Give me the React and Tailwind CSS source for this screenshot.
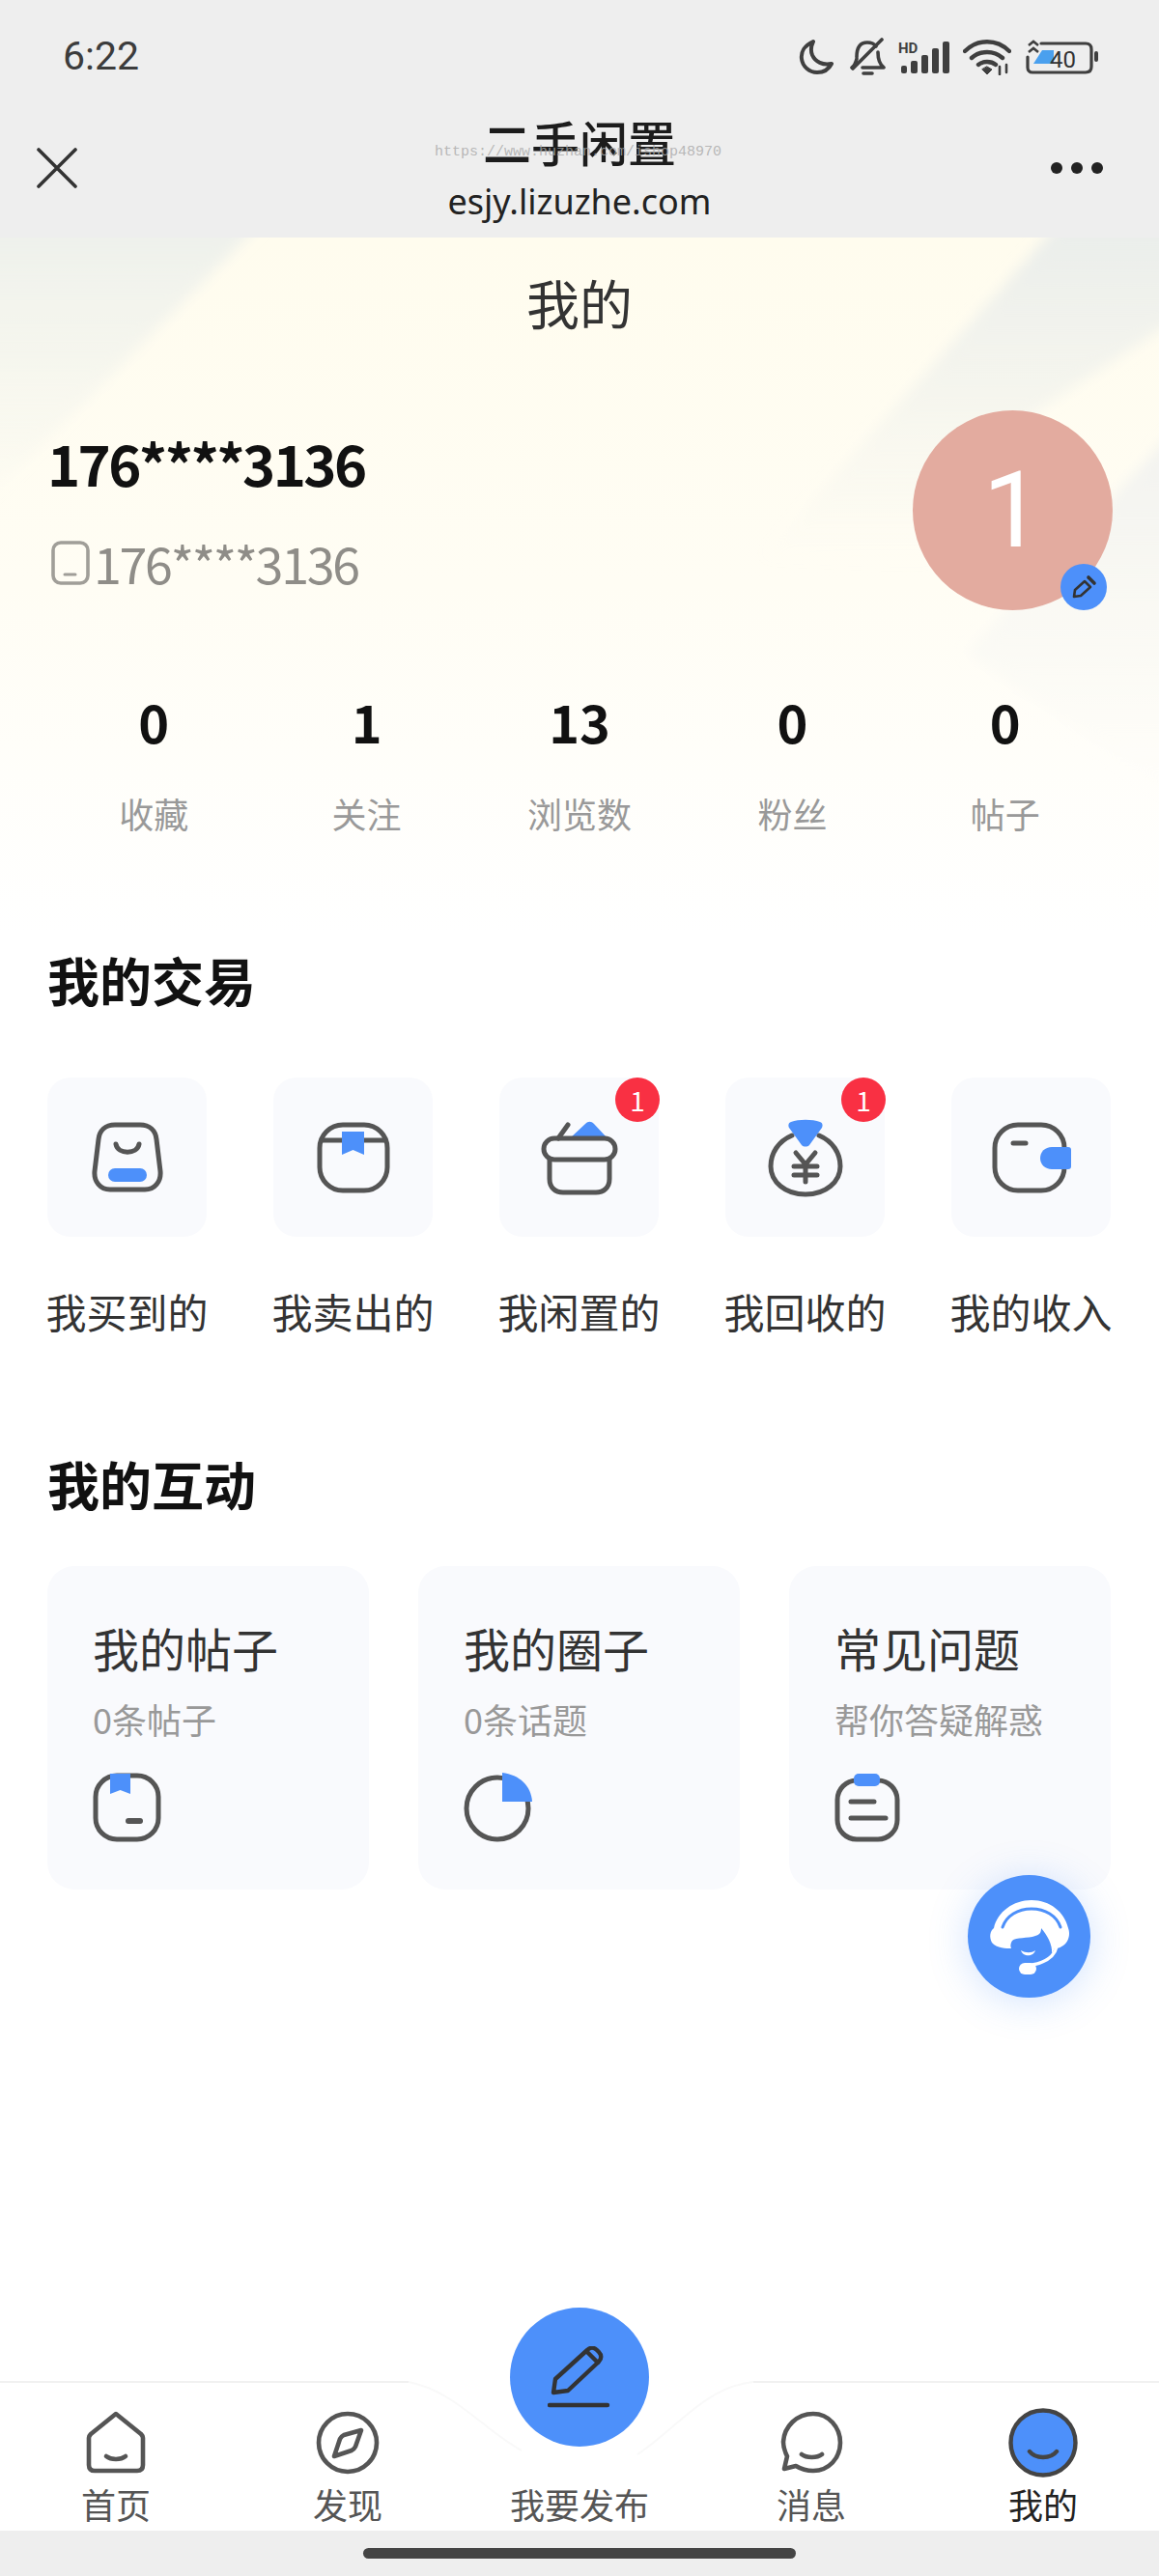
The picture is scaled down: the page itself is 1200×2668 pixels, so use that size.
const BLUE = '#4d90fa';
const INK = '#555555';

function Moon() {
  return (
    <svg width="36" height="38" viewBox="0 0 36 38" fill="none">
      <path d="M15 3C6 7 2 14 3 21c1 8 8 14 16 14 7 0 12-3 15-9-9 2-17-2-20-9-2-5-1-10 1-14z" stroke="#3f3f3f" strokeWidth="4" strokeLinejoin="round" />
    </svg>
  );
}

function BellOff() {
  return (
    <svg width="37" height="40" viewBox="0 0 37 40" fill="none" stroke="#3f3f3f" strokeWidth="3.6" strokeLinecap="round" strokeLinejoin="round">
      <path d="M7 20c0-10 4-15 11-15 4 0 7 1 9 4" />
      <path d="M29 15c0 6 1 12 6 16H13" />
      <path d="M2 31c3-2 4-5 5-9" />
      <path d="M33 2 3 32" />
      <path d="M14 37h9" />
    </svg>
  );
}

function Signal() {
  return (
    <svg width="53" height="34" viewBox="0 0 53 34" fill="#3f3f3f">
      <text x="0" y="13" fontSize="15" fontWeight="700" fontFamily="Roboto, sans-serif">HD</text>
      <rect x="3" y="26" width="6" height="8" rx="2" />
      <rect x="13" y="21" width="7" height="13" rx="2" />
      <rect x="24" y="15" width="7" height="19" rx="2" />
      <rect x="35" y="8" width="7" height="26" rx="2" />
      <rect x="46" y="1" width="7" height="33" rx="2" />
    </svg>
  );
}

function Wifi() {
  return (
    <svg width="50" height="38" viewBox="0 0 50 38" fill="none" stroke="#3f3f3f" strokeWidth="4.4" strokeLinecap="round">
      <path d="M2 13c13-13 33-13 46 0" />
      <path d="M9 20c9-8 23-8 32 0" />
      <path d="M16 27c5-4 13-4 18 0" />
      <path d="M20 32l5 5 5-5-5-3z" fill="#3f3f3f" strokeWidth="1" />
      <path d="M38 29v8M45 27v8" strokeWidth="2.6" />
    </svg>
  );
}

function Battery() {
  return (
    <svg width="75" height="38" viewBox="0 0 75 38" fill="none">
      <path d="M17 12h12v14H8l9-14z" fill="#4aa0ee" />
      <path d="M16 5h46c4 0 6 2 6 6v18c0 4-2 6-6 6H7c-3 0-5-2-5-5V19" stroke="#3f3f3f" strokeWidth="3.2" strokeLinecap="round" />
      <rect x="71" y="13" width="4" height="11" rx="2" fill="#3f3f3f" />
      <path d="M3 7l5-4 5 4M3 14l5-4 5 4" stroke="#3f3f3f" strokeWidth="2.6" />
      <text x="25" y="30" fontSize="24" fill="#333" fontFamily="Roboto, sans-serif">40</text>
    </svg>
  );
}

function Backdrop() {
  return (
    <svg className="absolute left-0 top-0" width="1200" height="720" viewBox="0 0 1200 720">
      <defs>
        <linearGradient id="cream" x1="0" y1="0" x2="0" y2="1">
          <stop offset="0" stopColor="#fffcee" />
          <stop offset="0.5" stopColor="#fffdf4" />
          <stop offset="1" stopColor="#ffffff" />
        </linearGradient>
        <linearGradient id="grayLeft" x1="0" y1="0" x2="0" y2="1">
          <stop offset="0" stopColor="#edf0ec" />
          <stop offset="1" stopColor="#edf0ec" stopOpacity="0" />
        </linearGradient>
        <linearGradient id="grayRight" x1="0" y1="0" x2="0" y2="1">
          <stop offset="0" stopColor="#e9edeb" />
          <stop offset="0.5" stopColor="#eef0ec" stopOpacity="0.6" />
          <stop offset="1" stopColor="#f3f3ee" stopOpacity="0" />
        </linearGradient>
        <linearGradient id="grayLow" x1="0" y1="0" x2="0" y2="1">
          <stop offset="0" stopColor="#f0f1ef" />
          <stop offset="1" stopColor="#f9f9f6" stopOpacity="0" />
        </linearGradient>
        <filter id="soft" x="-20%" y="-20%" width="140%" height="140%">
          <feGaussianBlur stdDeviation="7" />
        </filter>
      </defs>
      <rect width="1200" height="720" fill="url(#cream)" />
      <g filter="url(#soft)">
        <path d="M-30 -30H285L-30 290z" fill="url(#grayLeft)" />
        <path d="M1110 -30H1240V70L1075 179 960 340 790 330z" fill="url(#grayRight)" />
        <path d="M1240 175 1000 430 1240 600z" fill="url(#grayLow)" />
      </g>
    </svg>
  );
}

function TileIcon({ name }) {
  const s = { fill: 'none', stroke: INK, strokeWidth: 5, strokeLinecap: 'round', strokeLinejoin: 'round' };
  if (name === 'bag') {
    return (
      <svg width="74" height="74" viewBox="0 0 74 74">
        <path {...s} d="M24 3h26c10 0 16 6 17 15l4 33c1 11-6 19-16 19H19C9 70 2 62 3 51l4-33C8 9 14 3 24 3z" />
        <path {...s} d="M25 23c2 11 22 11 24 0" />
        <rect x="17" y="48" width="40" height="14" rx="7" fill={BLUE} />
      </svg>
    );
  }
  if (name === 'box') {
    return (
      <svg width="76" height="74" viewBox="0 0 76 74">
        <rect {...s} x="3" y="3" width="70" height="68" rx="24" />
        <path {...s} d="M6 19h64" />
        <path d="M26 10h23v24l-11.500-5-11.500 5z" fill={BLUE} />
      </svg>
    );
  }
  if (name === 'pot') {
    return (
      <svg width="80" height="78" viewBox="0 0 80 78">
        <path d="M30 19 46 4c3-3 6-3 9 0l14 15z" fill={BLUE} />
        <path {...s} d="M18 19 28 5" />
        <rect {...s} x="3" y="19" width="74" height="22" rx="11" />
        <path {...s} d="M9 41v20c0 9 6 14 14 14h34c8 0 14-5 14-14V41" />
      </svg>
    );
  }
  if (name === 'money') {
    return (
      <svg width="80" height="82" viewBox="0 0 80 82">
        <path {...s} d="M26 18C12 24 4 36 4 50c0 16 15 29 36 29s36-13 36-29c0-14-8-26-22-32" />
        <path d="M25 4c8-3 22-3 30 0 3 1 3 4 2 6L44 28c-2 2-6 2-8 0L23 10c-1-2-1-5 2-6z" fill={BLUE} />
        <path {...s} d="M30 36 40 48 50 36M28 50h24M28 59h24M40 48v18" />
      </svg>
    );
  }
  return (
    <svg width="82" height="74" viewBox="0 0 82 74">
      <rect {...s} x="3" y="3" width="72" height="68" rx="24" />
      <path {...s} d="M22 22h13" />
      <path d="M62 26h17c2 0 3 1 3 3v17c0 2-1 3-3 3H62c-7 0-12-5-12-11.500S55 26 62 26z" fill={BLUE} />
    </svg>
  );
}

function CardIcon({ name }) {
  const s = { fill: 'none', stroke: INK, strokeWidth: 5, strokeLinecap: 'round', strokeLinejoin: 'round' };
  if (name === 'post') {
    return (
      <svg width="72" height="72" viewBox="0 0 72 72">
        <rect {...s} x="3" y="3" width="65" height="66" rx="22" />
        <path d="M18 1h21v21l-10.500-4L18 22z" fill={BLUE} />
        <path d="M37 50h12" fill="none" stroke={INK} strokeWidth="6" strokeLinecap="round" />
      </svg>
    );
  }
  if (name === 'circle') {
    return (
      <svg width="72" height="72" viewBox="0 0 72 72">
        <circle {...s} cx="35" cy="37" r="32" />
        <path d="M40 0c18 2 30 14 31 30H40z" fill={BLUE} />
      </svg>
    );
  }
  return (
    <svg width="72" height="72" viewBox="0 0 72 72">
      <rect {...s} x="3" y="8" width="62" height="61" rx="20" />
      <rect x="20" y="1" width="27" height="13" rx="5" fill={BLUE} />
      <path d="M17 30h24M17 47h36" fill="none" stroke={INK} strokeWidth="5" strokeLinecap="round" />
    </svg>
  );
}

function NavIcon({ name }) {
  const s = { fill: 'none', stroke: INK, strokeWidth: 4.6, strokeLinecap: 'round', strokeLinejoin: 'round' };
  if (name === 'home') {
    return (
      <svg width="64" height="66" viewBox="0 0 64 66">
        <path {...s} d="M32 3 58 24c1 1 2 2 2 4v28c0 4-2 6-6 6H10c-4 0-6-2-6-6V28c0-2 1-3 2-4z" />
        <path {...s} d="M22 47c5 4 15 4 20 0" />
      </svg>
    );
  }
  if (name === 'compass') {
    return (
      <svg width="66" height="66" viewBox="0 0 66 66">
        <circle {...s} cx="33" cy="33" r="30" />
        <path {...s} d="M47 20 41 37c-1 2-2 3-4 4l-18 6 6-18c1-2 2-3 4-4z" />
      </svg>
    );
  }
  if (name === 'message') {
    return (
      <svg width="66" height="66" viewBox="0 0 66 66">
        <path {...s} d="M35 3C18 3 5 16 4 32c0 6 2 11 4 15L5 60l12-3c5 3 11 5 18 5 16 0 28-13 28-29S51 3 35 3z" />
        <path {...s} d="M23 45c5 4 16 4 21 0" />
      </svg>
    );
  }
  return (
    <svg width="72" height="72" viewBox="0 0 72 72">
      <circle cx="36" cy="36" r="33.500" fill={BLUE} stroke="#444444" strokeWidth="4.400" />
      <path d="M22 45c6 8 22 8 28 0" fill="none" stroke="#444444" strokeWidth="4.400" strokeLinecap="round" />
    </svg>
  );
}

function Headset() {
  return (
    <svg width="127" height="127" viewBox="0 0 127 127">
      <path d="M25 70C22 64 23 58 27 55 31 38 47 26 66 26S100 38 104 55C106 60 105 66 102 70 98 75 93 76 90 76L87 81C88 72 82 62 76 55 76 60 74 62 70 63 62 66 50 64 46 68 44 71 44 74 45 76 40 76 30 76 25 70z" fill="white" />
      <path d="M36 54C40 42 52 35 66 35S92 42 96 54" fill="none" stroke={BLUE} strokeWidth="3" strokeLinecap="round" />
      <path d="M55 78c5 3 11 3 15 0-2 7-13 7-15 0z" fill="white" />
      <path d="M92 74C90 84 82 90 67 93" fill="none" stroke="white" strokeWidth="3.500" strokeLinecap="round" />
      <rect x="53" y="91" width="18" height="12" rx="6" fill="white" />
    </svg>
  );
}

const STATS = [
  { value: '0', label: '收藏' },
  { value: '1', label: '关注' },
  { value: '13', label: '浏览数' },
  { value: '0', label: '粉丝' },
  { value: '0', label: '帖子' },
];

const TRADES = [
  { label: '我买到的', icon: 'bag' },
  { label: '我卖出的', icon: 'box' },
  { label: '我闲置的', icon: 'pot', badge: 1 },
  { label: '我回收的', icon: 'money', badge: 1 },
  { label: '我的收入', icon: 'wallet' },
];

const CARDS = [
  { title: '我的帖子', sub: '0条帖子', icon: 'post' },
  { title: '我的圈子', sub: '0条话题', icon: 'circle' },
  { title: '常见问题', sub: '帮你答疑解惑', icon: 'faq' },
];

const TABS = [
  { label: '首页', icon: 'home' },
  { label: '发现', icon: 'compass' },
  { label: '我要发布' },
  { label: '消息', icon: 'message' },
  { label: '我的', icon: 'me', active: true },
];

export default function App() {
  return (
    <div className="relative flex h-[2668px] w-[1200px] flex-col overflow-hidden bg-[#eeeeee] font-['Noto_Sans_CJK_SC','Noto_Sans',sans-serif]">
      {/* status bar */}
      <div className="flex h-[118px] items-center justify-between pl-[65px] pr-[63px]">
        <span className="font-['Roboto',sans-serif] text-[41px] text-[#3c3c3c]">6:22</span>
        <div className="flex items-center">
          <Moon />
          <div className="ml-[17px]"><BellOff /></div>
          <div className="ml-[13px]"><Signal /></div>
          <div className="ml-[14px]"><Wifi /></div>
          <div className="ml-[15px]"><Battery /></div>
        </div>
      </div>

      {/* browser title */}
      <div className="relative grid h-[128px] grid-cols-[1fr_auto_1fr]">
        <svg className="ml-[38px] mt-[35px]" width="42" height="42" viewBox="0 0 42 42" fill="none" stroke="#333333" strokeWidth="3.600" strokeLinecap="round">
          <path d="M2 2l38 38M40 2 2 40" />
        </svg>
        <div className="flex flex-col items-center">
          <span className="mt-[-4px] text-[50px] font-medium leading-[64px] text-[#1c1c1c]">二手闲置</span>
          <span className="font-['Noto_Sans',sans-serif] text-[36px] leading-[62px] text-[#222222]">esjy.lizuzhe.com</span>
        </div>
        <div className="flex justify-end pr-[58px] pt-[50px]">
          <div className="flex h-[12px] gap-[9px]">
            <span className="h-[12px] w-[12px] rounded-full bg-[#222222]" />
            <span className="h-[12px] w-[12px] rounded-full bg-[#222222]" />
            <span className="h-[12px] w-[12px] rounded-full bg-[#222222]" />
          </div>
        </div>
        <span className="absolute left-[450px] top-[30px] font-['Liberation_Mono',monospace] text-[15px] leading-[20px] text-[#a8a8a8]/80">https://www.huzhan.com/ishop48970</span>
      </div>

      {/* page */}
      <main className="relative flex-1 bg-white">
        <Backdrop />
        <div className="relative">
          <h1 className="h-[138px] text-center text-[55px] font-normal leading-[132px] text-[#333333]">我的</h1>

          <div className="mt-[41px] flex items-start justify-between pl-[49px] pr-[48px]">
            <div className="pt-[14px]">
              <div className="text-[58px] font-bold leading-[80px] tracking-[-2.6px] text-[#111111]">176****3136</div>
              <div className="mt-[29px] flex h-[70px] items-center">
                <svg className="ml-[4px] mr-[4px]" width="40" height="46" viewBox="0 0 40 46" fill="none" stroke="#a09e98">
                  <rect x="2" y="2" width="36" height="42" rx="8" strokeWidth="3.600" />
                  <path d="M14 35h11" strokeWidth="3" strokeLinecap="round" />
                </svg>
                <span className="text-[52px] leading-[70px] tracking-[-2.300px] text-[#8f8d88]">176****3136</span>
              </div>
            </div>
            <div className="relative flex h-[207px] w-[207px] items-center justify-center rounded-full bg-[#e3ab9f]">
              <span className="font-['Roboto',sans-serif] text-[110px] leading-none text-white">1</span>
              <div className="absolute bottom-0 right-[6px] flex h-[48px] w-[48px] items-center justify-center rounded-full bg-[#4d90fa]">
                <svg width="28" height="28" viewBox="0 0 28 28" fill="none" stroke="#333333" strokeWidth="2.600" strokeLinejoin="round" strokeLinecap="round">
                  <path d="M4 24l1-7L15 8l6 6-10 9z" />
                  <path d="M19 4l6 6" strokeWidth="3.600" />
                </svg>
              </div>
            </div>
          </div>

          <div className="mt-[80px] grid grid-cols-5 px-[49px]">
            {STATS.map((s) => (
              <div key={s.label} className="flex flex-col items-center">
                <span className="text-[54px] font-bold leading-[70px] text-[#111111]">{s.value}</span>
                <span className="mt-[35px] text-[36px] leading-[50px] text-[#999999]">{s.label}</span>
              </div>
            ))}
          </div>

          <h2 className="mt-[113px] pl-[49px] text-[54px] font-bold leading-[70px] text-[#111111]">我的交易</h2>
          <div className="mt-[66px] flex gap-[69px] pl-[49px]">
            {TRADES.map((t) => (
              <div key={t.label} className="flex w-[165px] flex-col items-center">
                <div className="relative flex h-[165px] w-[165px] items-center justify-center rounded-[24px] bg-[#f9fafd]">
                  <TileIcon name={t.icon} />
                  {t.badge && (
                    <span className="absolute right-[-1px] top-0 flex h-[46px] w-[46px] items-center justify-center rounded-full bg-[#f93043] text-[28px] leading-none text-white">{t.badge}</span>
                  )}
                </div>
                <span className="mt-[47px] whitespace-nowrap text-[42px] leading-[60px] text-[#333333]">{t.label}</span>
              </div>
            ))}
          </div>

          <h2 className="mt-[114px] pl-[49px] text-[54px] font-bold leading-[70px] text-[#111111]">我的互动</h2>
          <div className="mt-[50px] flex gap-[51px] pl-[49px]">
            {CARDS.map((c) => (
              <div key={c.title} className="h-[335px] w-[333px] rounded-[28px] bg-[#f9fafd] pl-[47px] pt-[54px]">
                <div className="text-[48px] leading-[60px] text-[#333333]">{c.title}</div>
                <div className="mt-[22px] text-[36px] leading-[44px] text-[#999999]">{c.sub}</div>
                <div className="mt-[34px]"><CardIcon name={c.icon} /></div>
              </div>
            ))}
          </div>
        </div>

        {/* floating service button */}
        <div className="absolute left-[1002px] top-[1696px] h-[127px] w-[127px] rounded-full bg-[#4d90fa] shadow-[0_4px_40px_rgba(77,144,250,0.25)]">
          <Headset />
        </div>
      </main>

      {/* tab bar */}
      <nav className="relative h-[155px] bg-white">
        <svg className="absolute left-0 top-0" width="1200" height="100" viewBox="0 0 1200 100" fill="none" strokeWidth="2">
          <path d="M0 1H423M1200 1H780" stroke="#f1f1f1" />
          <path d="M423 1C470 10 500 50 540 72M780 1C730 6 700 50 660 76" stroke="#f9f9f9" />
        </svg>
        <div className="absolute left-[528px] top-[-76px] flex h-[144px] w-[144px] items-center justify-center rounded-full bg-[#4d90fa]">
          <svg width="66" height="64" viewBox="0 0 66 64" fill="none" stroke="#333333" strokeWidth="4.400" strokeLinecap="round" strokeLinejoin="round">
            <path d="M6 48l2-14L41 4c3-3 7-3 10 0l2 2c3 3 3 7 0 10L21 46z" />
            <path d="M41 6l11 11" />
            <path d="M2 61h60" />
          </svg>
        </div>
        <div className="relative grid grid-cols-5 pt-[28px]">
          {TABS.map((t) => (
            <div key={t.label} className="flex flex-col items-center">
              <div className="flex h-[72px] items-center justify-center">
                {t.icon && <NavIcon name={t.icon} />}
              </div>
              <span className={`mt-[5px] text-[36px] leading-[44px] ${t.active ? 'text-[#222222]' : 'text-[#555555]'}`}>{t.label}</span>
            </div>
          ))}
        </div>
      </nav>

      {/* gesture bar */}
      <div className="flex h-[47px] justify-center pt-[18px]">
        <div className="h-[11px] w-[448px] rounded-full bg-[#444444]" />
      </div>
    </div>
  );
}
